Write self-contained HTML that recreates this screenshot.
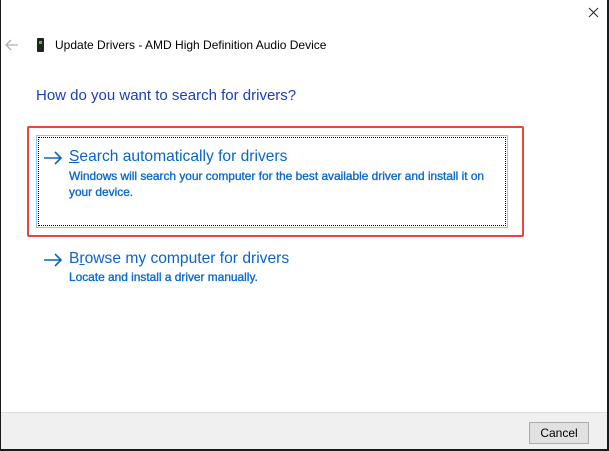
<!DOCTYPE html>
<html><head><meta charset="utf-8"><style>
*{margin:0;padding:0;box-sizing:border-box}
body{width:609px;height:451px;overflow:hidden;background:#fff;font-family:"Liberation Sans",sans-serif;position:relative}
.win{position:absolute;left:0;top:0;width:609px;height:451px;border-left:1px solid #1a1a1a;border-right:2px solid #1a1a1a;border-bottom:2px solid #1a1a1a}
.abs{position:absolute;white-space:nowrap}
.footer{position:absolute;left:1px;right:2px;top:412px;bottom:2px;background:#f0f0f0;border-top:1px solid #dfdfdf}
.btn{position:absolute;left:529px;top:422px;width:60px;height:22px;border:1px solid #adadad;background:#e1e1e1;font-size:12px;text-align:center;line-height:20px;color:#000}
.t1{font-size:15.6px;color:#0a64c8}
.t2{font-size:11.9px;color:#0a6ad0;font-weight:normal;-webkit-text-stroke:0.35px #0a6ad0}
</style></head><body>
<div class="win"></div>
<svg class="abs" style="left:588px;top:7px" width="11" height="11"><path d="M1 1L10 10M10 1L1 10" stroke="#222" stroke-width="1"/></svg>
<svg class="abs" style="left:5px;top:39px" width="14" height="12"><path d="M1 6H13M6 1L1 6L6 11" stroke="#b0b0b0" stroke-width="1.3" fill="none"/></svg>
<div class="abs" style="left:37px;top:38px;width:7px;height:14px;background:#222;border-radius:1px"></div>
<div class="abs" style="left:39px;top:41px;width:3px;height:3px;background:#3c3"></div>
<div class="abs" style="left:55px;top:38px;font-size:12px;color:#000">Update Drivers - AMD High Definition Audio Device</div>
<div class="abs" style="left:36px;top:87px;font-size:15px;color:#1a3fb8">How do you want to search for drivers?</div>
<div class="abs" style="left:27px;top:126px;width:497px;height:111px;border:2.5px solid #e8453c;border-radius:2px"></div>
<div class="abs" style="left:36px;top:135px;width:472px;height:93px;border:1px solid #8cc4ec"></div>
<div class="abs" style="left:38px;top:137px;width:468px;height:89px;border:1px dotted #000"></div>
<svg class="abs" style="left:44px;top:151px" width="19" height="14"><path d="M0 7H17M11 1L17 7L11 13" stroke="#0a64c8" stroke-width="1.6" fill="none"/></svg>
<div class="abs t1" style="left:69px;top:148px"><u>S</u>earch automatically for drivers</div>
<div class="abs t2" style="left:69px;top:168px;line-height:16px">Windows will search your computer for the best available driver and install it on<br>your device.</div>
<svg class="abs" style="left:44px;top:253px" width="19" height="14"><path d="M0 7H17M11 1L17 7L11 13" stroke="#0a64c8" stroke-width="1.6" fill="none"/></svg>
<div class="abs t1" style="left:69px;top:250px">B<u>r</u>owse my computer for drivers</div>
<div class="abs t2" style="left:69px;top:270px">Locate and install a driver manually.</div>
<div class="footer"></div>
<div class="btn">Cancel</div>
</body></html>
